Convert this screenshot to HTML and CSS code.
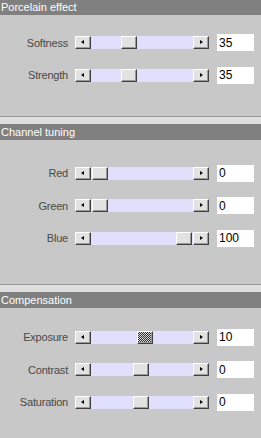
FILE: index.html
```html
<!DOCTYPE html>
<html lang="en">
<head>
    <meta charset="UTF-8">
    <title>Porcelain effect</title>
    <link rel="stylesheet" href="styles.css">
</head>
<body>
    <section class="panel panel-porcelain">
        <h2>Porcelain effect</h2>
        <div class="rows">
            <div class="row">
                <label>Softness</label>
                <div class="slider">
                    <span class="btn btn-left"></span>
                    <span class="track"><span class="thumb" style="left: 30px"></span></span>
                    <span class="btn btn-right"></span>
                </div>
                <input type="text" value="35">
            </div>
            <div class="row">
                <label>Strength</label>
                <div class="slider">
                    <span class="btn btn-left"></span>
                    <span class="track"><span class="thumb" style="left: 30px"></span></span>
                    <span class="btn btn-right"></span>
                </div>
                <input type="text" value="35">
            </div>
        </div>
    </section>

    <section class="panel panel-channel">
        <h2>Channel tuning</h2>
        <div class="rows">
            <div class="row">
                <label>Red</label>
                <div class="slider">
                    <span class="btn btn-left"></span>
                    <span class="track"><span class="thumb" style="left: 1px"></span></span>
                    <span class="btn btn-right"></span>
                </div>
                <input type="text" value="0">
            </div>
            <div class="row">
                <label>Green</label>
                <div class="slider">
                    <span class="btn btn-left"></span>
                    <span class="track"><span class="thumb" style="left: 1px"></span></span>
                    <span class="btn btn-right"></span>
                </div>
                <input type="text" value="0">
            </div>
            <div class="row">
                <label>Blue</label>
                <div class="slider">
                    <span class="btn btn-left"></span>
                    <span class="track"><span class="thumb" style="left: 85px"></span></span>
                    <span class="btn btn-right"></span>
                </div>
                <input type="text" value="100">
            </div>
        </div>
    </section>

    <section class="panel panel-comp">
        <h2>Compensation</h2>
        <div class="rows">
            <div class="row">
                <label>Exposure</label>
                <div class="slider">
                    <span class="btn btn-left"></span>
                    <span class="track"><span class="thumb focused" style="left: 46px"></span></span>
                    <span class="btn btn-right"></span>
                </div>
                <input type="text" value="10">
            </div>
            <div class="row">
                <label>Contrast</label>
                <div class="slider">
                    <span class="btn btn-left"></span>
                    <span class="track"><span class="thumb" style="left: 42px"></span></span>
                    <span class="btn btn-right"></span>
                </div>
                <input type="text" value="0">
            </div>
            <div class="row">
                <label>Saturation</label>
                <div class="slider">
                    <span class="btn btn-left"></span>
                    <span class="track"><span class="thumb" style="left: 42px"></span></span>
                    <span class="btn btn-right"></span>
                </div>
                <input type="text" value="0">
            </div>
        </div>
    </section>
</body>
</html>
```

FILE: styles.css
```css
:root {
    --panel-bg: #c8c8c8;
    --head-bg: #808080;
    --band: #dedede;
    --track: #e0e0fc;
    --face: #e2e2e2;
    --label: #484848;
    --font: 'Liberation Sans', Arial, sans-serif;
}
body {
    margin: 0;
    background: var(--panel-bg);
    font-family: var(--font);
    font-size: 11px;
    height: 438px;
}
.panel h2 {
    margin: 0;
    background: var(--head-bg);
    color: #ffffff;
    font-size: 11px;
    font-weight: normal;
    line-height: 15px;
    height: 15px;
    padding-left: 1px;
}
.panel + .panel {
    border-top: 1px solid #999999;
    padding-top: 7px;
    background: linear-gradient(var(--band), var(--band)) top / 100% 7px no-repeat;
}
.panel + .panel h2 {
    height: 16px;
    line-height: 16px;
}
.rows {
    display: flex;
    flex-direction: column;
    gap: 16.5px;
}
.panel-porcelain .rows { padding: 19px 0 33px; }
.panel-channel .rows { padding: 25px 0 38px; }
.panel-comp .rows { padding: 21px 0 0; }

.row {
    display: grid;
    grid-template-columns: 68px 134px 37px;
    column-gap: 7px;
    align-items: center;
    height: 16px;
}
.row label {
    text-align: right;
    color: var(--label);
    letter-spacing: -0.2px;
}
.row input {
    margin-left: 1px;
    width: 37px;
    height: 17px;
    box-sizing: border-box;
    border: none;
    padding: 0 0 0 2px;
    background: #ffffff;
    font-family: var(--font);
    font-size: 12px;
    color: #000000;
}
.slider {
    display: flex;
    height: 13px;
}
.btn {
    position: relative;
    width: 16px;
    height: 13px;
    box-sizing: border-box;
    background: var(--face);
    border-top: 1px solid #ffffff;
    border-left: 1px solid #ffffff;
    border-right: 1px solid #404040;
    border-bottom: 1px solid #404040;
    box-shadow: inset -1px -1px 0 #9a9a9a;
}
.btn::after {
    content: "";
    position: absolute;
    top: 3px;
    left: 5px;
    border-top: 2.5px solid transparent;
    border-bottom: 2.5px solid transparent;
}
.btn-left::after { border-right: 3px solid #000000; }
.btn-right::after { border-left: 3px solid #000000; left: 6px; }
.track {
    position: relative;
    flex: 1;
    background: var(--track);
}
.thumb {
    position: absolute;
    top: 0;
    width: 16px;
    height: 13px;
    box-sizing: border-box;
    background: var(--face);
    border-top: 1px solid #ffffff;
    border-left: 1px solid #ffffff;
    border-right: 1px solid #404040;
    border-bottom: 1px solid #404040;
    box-shadow: inset -1px -1px 0 #9a9a9a;
}
.thumb.focused {
    background: repeating-conic-gradient(#303030 0 25%, #d8d8d8 0 50%) 0 0 / 2px 2px;
}
```
